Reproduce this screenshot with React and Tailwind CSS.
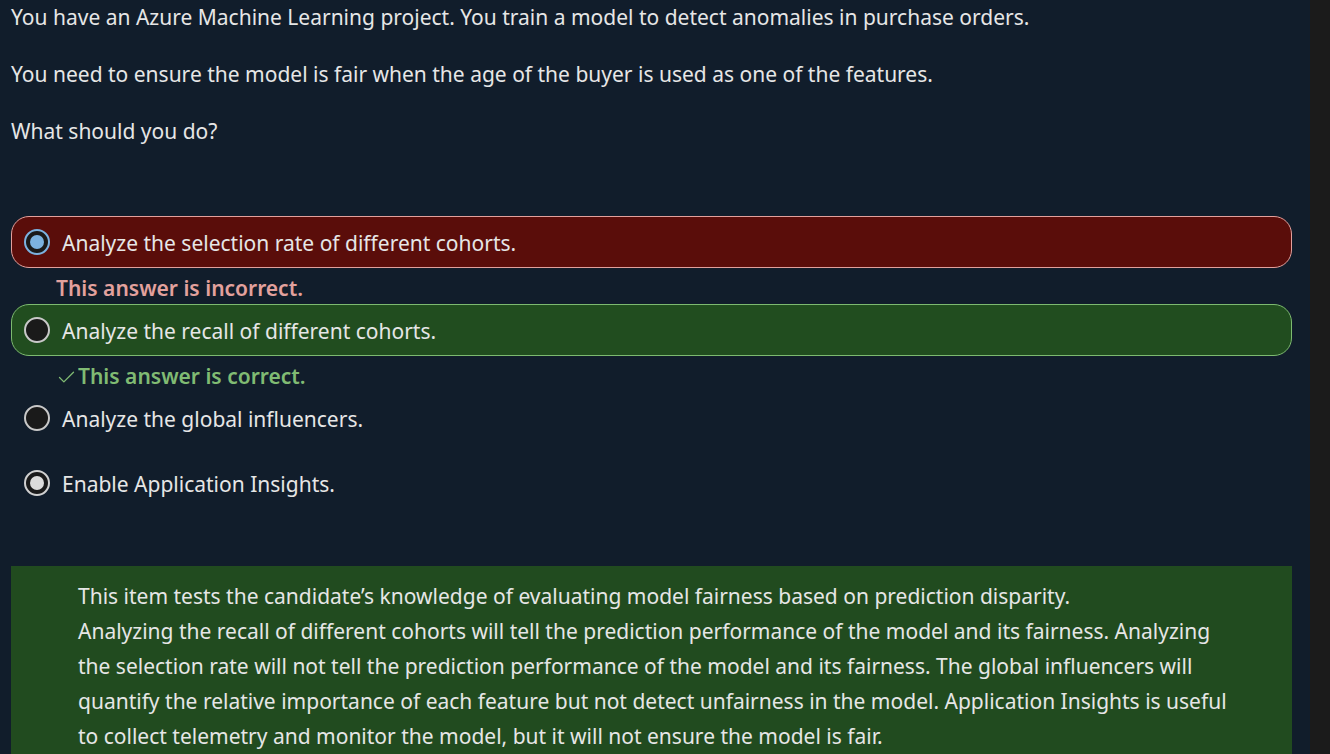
import { Check } from "lucide-react";

function Radio({ variant }) {
  if (variant === "selected") {
    return (
      <span className="w-[26px] h-[26px] rounded-full border-2 border-[#7cb2e0] bg-[#1a1a1a] flex items-center justify-center shrink-0">
        <span className="w-[14px] h-[14px] rounded-full bg-[#7cb2e0]" />
      </span>
    );
  }
  if (variant === "dot") {
    return (
      <span className="w-[26px] h-[26px] rounded-full border-2 border-[#d0d0d0] bg-[#1a1a1a] flex items-center justify-center shrink-0">
        <span className="w-[14px] h-[14px] rounded-full bg-[#dcdcdc]" />
      </span>
    );
  }
  return (
    <span className="w-[26px] h-[26px] rounded-full border-2 border-[#c8c8c8] bg-[#1a1a1a] shrink-0" />
  );
}

function Option({ text, radio, tone }) {
  const box =
    tone === "wrong"
      ? "bg-[#5a0d0a] border-[#e2a09c]"
      : tone === "right"
      ? "bg-[#214d1f] border-[#7dba70]"
      : "border-transparent";
  return (
    <div className={`flex items-center gap-[12px] h-[52px] pl-[12px] rounded-[18px] border ${box}`}>
      <Radio variant={radio} />
      <span className="pt-[3px]">{text}</span>
    </div>
  );
}

export default function App() {
  return (
    <div
      className="flex w-[1330px] h-[754px] overflow-hidden bg-[#1b1b1b] text-[21px] text-[#e6e6e6]"
      style={{ fontFamily: '"Noto Sans", "Open Sans", sans-serif' }}
    >
      <div className="w-[1310px] bg-[#111d2b] pl-[11px] pr-[18px]">
        <div className="pt-[3px] space-y-[28px] leading-[29px] whitespace-nowrap">
          <p>You have an Azure Machine Learning project. You train a model to detect anomalies in purchase orders.</p>
          <p>You need to ensure the model is fair when the age of the buyer is used as one of the features.</p>
          <p>What should you do?</p>
        </div>

        <div className="mt-[70px]">
          <Option text="Analyze the selection rate of different cohorts." radio="selected" tone="wrong" />
          <p className="pl-[45px] pt-[5px] h-[36px] flex items-center font-semibold text-[#e3a19d]">This answer is incorrect.</p>
          <Option text="Analyze the recall of different cohorts." radio="empty" tone="right" />
          <p className="pl-[45px] pt-[2px] h-[40px] flex items-center font-semibold text-[#80bb73]">
            <Check className="w-[21px] h-[21px] mr-[1px]" strokeWidth={1.5} />
            This answer is correct.
          </p>
          <div className="mt-[-4px]">
            <Option text="Analyze the global influencers." radio="empty" />
          </div>
          <div className="mt-[13px]">
            <Option text="Enable Application Insights." radio="dot" />
          </div>
        </div>

        <div className="mt-[57px] bg-[#214b1f] pl-[67px] pr-[10px] pt-[13px] pb-[20px] leading-[35px] whitespace-nowrap">
          <p>This item tests the candidate’s knowledge of evaluating model fairness based on prediction disparity.</p>
          <p>
            Analyzing the recall of different cohorts will tell the prediction performance of the model and its fairness. Analyzing
            <br />
            the selection rate will not tell the prediction performance of the model and its fairness. The global influencers will
            <br />
            quantify the relative importance of each feature but not detect unfairness in the model. Application Insights is useful
            <br />
            to collect telemetry and monitor the model, but it will not ensure the model is fair.
          </p>
        </div>
      </div>
    </div>
  );
}
